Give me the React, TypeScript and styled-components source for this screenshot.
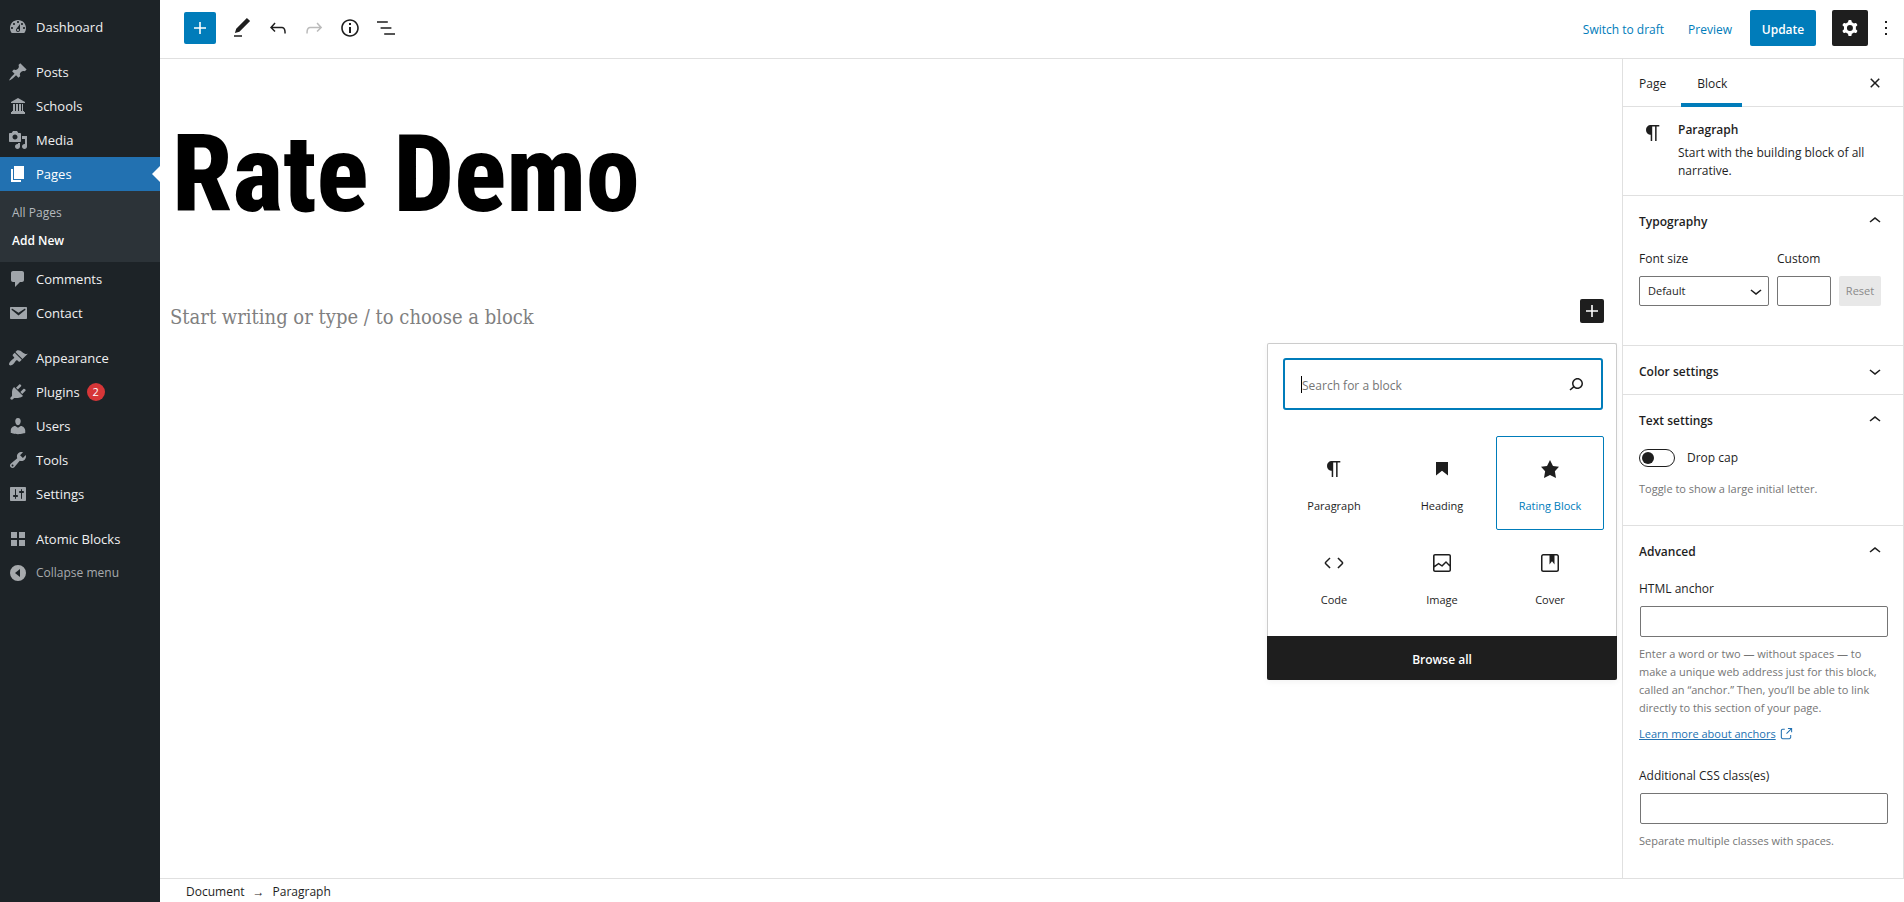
import React, { useState } from 'react';
import styled, { createGlobalStyle, css } from 'styled-components';

const Global = createGlobalStyle`
  *, *::before, *::after { box-sizing: border-box; }
  body { margin: 0; background: #fff; color: #1e1e1e; font: 12px/18px "Open Sans", "Noto Sans", sans-serif; }
  button, input, select { font: inherit; color: inherit; margin: 0; }
  button { padding: 0; border: 0; background: none; cursor: pointer; }
  h1, h2, p, ul { margin: 0; padding: 0; }
  ul { list-style: none; }
  a { text-decoration: none; color: inherit; }
  svg { display: block; flex: none; fill: currentColor; }
`;

const icons = {
  plus: 'M18 11.2h-5.2V6h-1.6v5.2H6v1.6h5.2V18h1.6v-5.2H18z',
  edit: 'M20.1 5.1L16.9 2 6.2 12.7l-1.3 4.4 4.5-1.3L20.1 5.1zM4 20.8h8v-1.5H4v1.5z',
  undo: 'M18.3 11.7c-.6-.6-1.4-.9-2.3-.9H6.7l2.9-3.3-1.1-1-4.5 5L8.5 16l1-1-2.7-2.7H16c.5 0 .9.2 1.3.5 1 1 1 3.4 1 4.5v.3h1.5v-.2c0-1.5 0-4.3-1.5-5.7z',
  redo: 'M15.6 6.5l-1.1 1 2.9 3.3H8c-.9 0-1.7.3-2.3.9-1.4 1.5-1.4 4.2-1.4 5.6v.2h1.5v-.3c0-1.1 0-3.5 1-4.5.3-.3.7-.5 1.3-.5h9.2L14.5 15l1.1 1.1 4.6-4.6-4.6-5z',
  info: 'M12 3.2c-4.8 0-8.8 3.9-8.8 8.8 0 4.8 3.9 8.8 8.8 8.8 4.8 0 8.8-3.9 8.8-8.8 0-4.8-4-8.8-8.8-8.8zm0 16c-4 0-7.2-3.3-7.2-7.2C4.8 8 8 4.8 12 4.8s7.2 3.3 7.2 7.2c0 4-3.2 7.2-7.2 7.2zM11 17h2v-6h-2v6zm0-8h2V7h-2v2z',
  list: 'M13.8 5.2H3v1.5h10.8V5.2zm-3.6 12v1.5H21v-1.5H10.2zm7.2-6H6.6v1.5h10.8v-1.5z',
  cog: 'M10.289 4.836A1 1 0 0111.275 4h1.306a1 1 0 01.987.836l.244 1.466c.787.26 1.503.679 2.108 1.218l1.393-.522a1 1 0 011.216.437l.653 1.13a1 1 0 01-.23 1.273l-1.148.944a6.025 6.025 0 010 2.435l1.149.946a1 1 0 01.23 1.272l-.653 1.13a1 1 0 01-1.216.437l-1.394-.522c-.605.54-1.32.958-2.108 1.218l-.244 1.466a1 1 0 01-.987.836h-1.306a1 1 0 01-.986-.836l-.244-1.466a5.995 5.995 0 01-2.108-1.218l-1.394.522a1 1 0 01-1.217-.436l-.653-1.131a1 1 0 01.23-1.272l1.149-.946a6.026 6.026 0 010-2.435l-1.148-.944a1 1 0 01-.23-1.272l.653-1.131a1 1 0 011.217-.437l1.393.522a5.994 5.994 0 012.108-1.218l.244-1.466zM14.929 12a3 3 0 11-6 0 3 3 0 016 0z',
  more: 'M13 19h-2v-2h2v2zm0-6h-2v-2h2v2zm0-6h-2V5h2v2z',
  close: 'M12 13.06l3.712 3.713 1.061-1.06L13.061 12l3.712-3.712-1.06-1.06L12 10.938 8.288 7.227l-1.061 1.06L10.939 12l-3.712 3.712 1.06 1.061L12 13.061z',
  paragraph: 'M18.3 4H9.9v-.1l-.9.2c-2.3.4-4 2.4-4 4.8s1.7 4.4 4 4.8l.7.1V20h1.5V5.5h2.9V20h1.5V5.5h2.7V4z',
  heading: 'M6 5v13.6l6-4.8 6 4.8V5H6z',
  star: 'M12 3l3 6 6 .75-4.12 4.62L18 21l-6-3-6 3 1.13-6.63L3 9.75 9 9z',
  code: 'M20.8 10.7l-4.3-4.3-1.1 1.1 4.3 4.3c.1.1.1.3 0 .4l-4.3 4.3 1.1 1.1 4.3-4.3c.7-.8.7-1.9 0-2.6zM4.2 11.8l4.3-4.3-1-1-4.3 4.3c-.7.7-.7 1.8 0 2.5l4.3 4.3 1.1-1.1-4.3-4.3c-.2-.1-.2-.3-.1-.4z',
  image: 'M19 3H5c-1.1 0-2 .9-2 2v14c0 1.1.9 2 2 2h14c1.1 0 2-.9 2-2V5c0-1.1-.9-2-2-2zM5 4.5h14c.3 0 .5.2.5.5v8.4l-3-2.9c-.3-.3-.8-.3-1 0L11.9 14 9 12c-.3-.2-.6-.2-.8 0l-3.6 2.6V5c-.1-.3.1-.5.4-.5zm14 15H5c-.3 0-.5-.2-.5-.5v-2.4l4.1-3 3 1.9c.3.2.7.2.9-.1L16 12l3.5 3.4V19c0 .3-.2.5-.5.5z',
  cover: 'M18.7 3H5.3C4 3 3 4 3 5.3v13.4C3 20 4 21 5.3 21h13.4c1.3 0 2.3-1 2.3-2.3V5.3C21 4 20 3 18.7 3zm.8 15.7c0 .4-.4.8-.8.8H5.3c-.4 0-.8-.4-.8-.8V5.3c0-.4.4-.8.8-.8h6.2v8.9l2.5-3.1 2.5 3.1V4.5h2.2c.4 0 .8.4.8.8v13.4z',
  search: 'M13.5 6C10.5 6 8 8.5 8 11.5c0 1.1.3 2.1.9 3l-3.4 3 1 1.1 3.4-2.9c1 .9 2.2 1.4 3.6 1.4 3 0 5.5-2.5 5.5-5.5C19 8.5 16.5 6 13.5 6zm0 9.5c-2.2 0-4-1.8-4-4s1.8-4 4-4 4 1.8 4 4-1.8 4-4 4z',
  up: 'M6.5 12.4L12 8l5.5 4.4-.9 1.2L12 10l-4.5 3.6-1-1.2z',
  down: 'M17.5 11.6L12 16l-5.5-4.4.9-1.2L12 14l4.5-3.6 1 1.2z',
  external: 'M18.2 17c0 .7-.6 1.2-1.2 1.2H7c-.7 0-1.2-.6-1.2-1.2V7c0-.7.6-1.2 1.2-1.2h3.2V4.2H7C5.5 4.2 4.2 5.5 4.2 7v10c0 1.5 1.2 2.8 2.8 2.8h10c1.5 0 2.8-1.2 2.8-2.8v-3.6h-1.5V17zM14.9 3v1.5h3.7l-6.4 6.4 1.1 1.1 6.4-6.4v3.7h1.5V3h-6.3z',
};

const menuIcons = {
  dashboard: 'M3.76 16h12.48c1.1-1.37 1.76-3.11 1.76-5 0-4.42-3.58-8-8-8s-8 3.58-8 8c0 1.89.66 3.63 1.76 5zM10 4c.55 0 1 .45 1 1s-.45 1-1 1-1-.45-1-1 .45-1 1-1zM6 6c.55 0 1 .45 1 1s-.45 1-1 1-1-.45-1-1 .45-1 1-1zm8 0c.55 0 1 .45 1 1s-.45 1-1 1-1-.45-1-1 .45-1 1-1zm-5.37 5.55L12 7v6c0 1.1-.9 2-2 2s-2-.9-2-2c0-.57.24-1.08.63-1.45zM4 10c.55 0 1 .45 1 1s-.45 1-1 1-1-.45-1-1 .45-1 1-1zm12 0c.55 0 1 .45 1 1s-.45 1-1 1-1-.45-1-1 .45-1 1-1zm-5 3c0-.55-.45-1-1-1s-1 .45-1 1 .45 1 1 1 1-.45 1-1z',
  posts: 'M10.44 3.02l1.82-1.82 6.36 6.35-1.83 1.82c-1.05-.68-2.48-.57-3.41.36l-.75.75c-.92.93-1.04 2.35-.35 3.41l-1.83 1.82-2.41-2.41-2.8 2.79c-.42.42-3.38 2.71-3.8 2.29s1.86-3.39 2.28-3.81l2.79-2.79L4.1 9.36l1.83-1.82c1.05.69 2.48.57 3.4-.36l.75-.75c.93-.92 1.05-2.35.36-3.41z',
  schools: 'M10 2l7 4v1H3V6zM5 8h2v7H5zM8 8h1v7H8zM9 8h1v7H9zM11 8h2v7h-2zM14 8h1v7h-1zM4 15h12v1H4zM3 16h14v2H3z',
  media: 'M13 11V4c0-.55-.45-1-1-1h-1.67L9 1H5L3.67 3H2c-.55 0-1 .45-1 1v7c0 .55.45 1 1 1h10c.55 0 1-.45 1-1zM7 4.5c1.38 0 2.5 1.12 2.5 2.5S8.38 9.5 7 9.5 4.5 8.38 4.5 7 5.62 4.5 7 4.5zM14 6h5v10.5c0 1.38-1.12 2.5-2.5 2.5S14 17.88 14 16.5s1.12-2.5 2.5-2.5c.17 0 .34.02.5.05V9h-3V6zm-4 8.05V13h2v3.5c0 1.38-1.12 2.5-2.5 2.5S7 17.88 7 16.5 8.12 14 9.5 14c.17 0 .34.02.5.05z',
  pages: 'M6 15V2h10v13H6zm-1 1h8v2H3V5h2v11z',
  comments: 'M5 2h9c1.1 0 2 .9 2 2v7c0 1.1-.9 2-2 2h-2l-5 5v-5H5c-1.1 0-2-.9-2-2V4c0-1.1.9-2 2-2z',
  contact: 'M3 4h15c.6 0 1 .4 1 1v10c0 .6-.4 1-1 1H3c-.6 0-1-.4-1-1V5c0-.6.4-1 1-1zm7.5 8.6l6.7-5.5c.3-.3.4-.7.2-1-.3-.4-.9-.5-1.2-.2l-5.7 3.9-5.7-3.9c-.4-.3-.9-.2-1.2.2-.2.3-.1.7.2 1z',
  appearance: 'M14.48 11.06L7.41 3.99l1.5-1.5c.5-.56 2.3-.47 3.51.32 1.21.8 1.43 1.28 2.91 2.1 1.18.64 2.45 1.26 4.45.85zm-.71.71L6.7 4.7 4.93 6.47c-.39.39-.39 1.02 0 1.41l1.06 1.06c.39.39.39 1.03 0 1.42-.6.6-1.43 1.11-2.21 1.69-.35.26-.7.53-1.01.84C1.43 14.23.4 16.08 1.4 17.07c.99 1 2.84-.03 4.18-1.36.31-.31.58-.66.85-1.02.57-.78 1.08-1.61 1.69-2.21.39-.39 1.02-.39 1.41 0l1.06 1.06c.39.39 1.02.39 1.41 0z',
  plugins: 'M13.11 4.36L9.87 7.6 8 5.73l3.24-3.24c.35-.34 1.05-.2 1.56.32.52.51.66 1.21.31 1.55zm-8 1.77l.91-1.12 9.01 9.01-1.19.84c-.71.71-2.63 1.16-3.82 1.16H6.14L4.9 17.26c-.59.59-1.54.59-2.12 0-.59-.58-.59-1.53 0-2.12l1.24-1.24v-3.88c0-1.13.4-3.19 1.09-3.89zm7.26 3.97l3.24-3.24c.34-.35 1.04-.21 1.55.31.52.51.66 1.21.31 1.55l-3.24 3.25z',
  users: 'M10 9.25c-2.27 0-2.73-3.44-2.73-3.44C7 4.02 7.82 2 9.97 2c2.16 0 2.98 2.02 2.71 3.81 0 0-.41 3.44-2.68 3.44zm0 2.57L12.72 10c2.39 0 4.52 2.33 4.52 4.53v2.49s-3.65 1.13-7.24 1.13c-3.65 0-7.24-1.13-7.24-1.13v-2.49c0-2.25 1.94-4.48 4.47-4.48z',
  tools: 'M16.68 9.77c-1.34 1.34-3.3 1.67-4.95.99l-5.41 6.52c-.99.99-2.59.99-3.58 0s-.99-2.59 0-3.57l6.52-5.42c-.68-1.65-.35-3.61.99-4.95 1.28-1.28 3.12-1.62 4.72-1.06l-2.89 2.89 2.82 2.82 2.86-2.87c.53 1.58.18 3.39-1.08 4.65zM3.81 16.21c.4.39 1.04.39 1.43 0 .4-.4.4-1.04 0-1.43-.39-.4-1.03-.4-1.43 0-.39.39-.39 1.03 0 1.43z',
  settings: 'M18 16V4c0-.55-.45-1-1-1H3c-.55 0-1 .45-1 1v12c0 .55.45 1 1 1h14c.55 0 1-.45 1-1zM8 11h1c.55 0 1 .45 1 1s-.45 1-1 1H8v1.5c0 .28-.22.5-.5.5s-.5-.22-.5-.5V13H6c-.55 0-1-.45-1-1s.45-1 1-1h1V5.5c0-.28.22-.5.5-.5s.5.22.5.5V11zm5-2h-1c-.55 0-1-.45-1-1s.45-1 1-1h1V5.5c0-.28.22-.5.5-.5s.5.22.5.5V7h1c.55 0 1 .45 1 1s-.45 1-1 1h-1v5.5c0 .28-.22.5-.5.5s-.5-.22-.5-.5V9z',
  blocks: 'M3 3h6v6H3zM11 3h6v6h-6zM3 11h6v6H3zM11 11h6v6h-6z',
  collapse: 'M10 2a8 8 0 100 16 8 8 0 000-16zM12 6v8l-5-4z',
};

function Icon({ name, size = 24 }: { name: keyof typeof icons; size?: number }) {
  return (
    <svg width={size} height={size} viewBox="0 0 24 24" aria-hidden="true">
      <path fillRule="evenodd" d={icons[name]} />
    </svg>
  );
}

function MenuIcon({ name }: { name: keyof typeof menuIcons }) {
  return (
    <svg width="20" height="20" viewBox="0 0 20 20" aria-hidden="true">
      <path fillRule="evenodd" d={menuIcons[name]} />
    </svg>
  );
}

/* ---------- frame ---------- */

const Shell = styled.div`
  display: grid;
  grid-template-columns: 160px minmax(0, 1fr);
  min-height: 100vh;
`;

const Editor = styled.div`
  display: grid;
  grid-template-columns: minmax(0, 1fr) 282px;
  grid-template-rows: 59px 1fr auto;
`;

/* ---------- admin menu ---------- */

const AdminMenu = styled.nav`
  padding-top: 10px;
  background: #1d2327;
  color: #f0f0f1;
  font-size: 13px;
`;

const MenuGroup = styled.ul`
  & + & { margin-top: 11px; }
`;

const menuRow = css`
  display: flex;
  align-items: center;
  gap: 8px;
  width: 100%;
  height: 34px;
  padding: 0 8px;
`;

const MenuLink = styled.a<{ $current?: boolean }>`
  ${menuRow}
  svg { color: #a0a5aa; }
  ${p => p.$current && css`
    position: relative;
    background: #2271b1;
    color: #fff;
    svg { color: #fff; }
    &::after {
      content: "";
      position: absolute;
      right: 0;
      border: 8px solid transparent;
      border-right-color: #fff;
    }
  `}
`;

const CollapseButton = styled.button`
  ${menuRow}
  color: #a7aaad;
  font-size: 12px;
`;

const SubMenu = styled.ul`
  padding: 8px 0 7px;
  background: #2c3338;
`;

const SubLink = styled.a<{ $current?: boolean }>`
  display: block;
  padding: 5px 12px;
  font-size: 12px;
  color: ${p => (p.$current ? '#fff' : '#b4b9be')};
  font-weight: ${p => (p.$current ? 600 : 400)};
`;

const Count = styled.span`
  width: 18px;
  margin-left: -1px;
  border-radius: 9px;
  background: #d63638;
  color: #fff;
  font-size: 11px;
  text-align: center;
`;

/* ---------- top bar ---------- */

const TopBar = styled.header`
  grid-column: 1 / -1;
  display: flex;
  align-items: center;
  justify-content: space-between;
  padding: 0 6px 2px 24px;
  border-bottom: 1px solid #e0e0e0;
`;

const Tools = styled.div`
  display: flex;
  align-items: center;
`;

const ToolButton = styled.button`
  display: grid;
  place-items: center;
  width: 36px;
  height: 36px;
  &:disabled { color: #bbb; }
`;

const Inserter = styled.button`
  display: grid;
  place-items: center;
  width: 32px;
  height: 32px;
  margin-right: 8px;
  border-radius: 2px;
  background: #007cba;
  color: #fff;
`;

const TextButton = styled.button`
  height: 36px;
  padding: 3px 12px 0;
  color: #007cba;
`;

const UpdateButton = styled.button`
  min-width: 66px;
  height: 36px;
  margin: 0 16px 0 6px;
  padding: 3px 8px 0;
  border-radius: 2px;
  background: #007cba;
  color: #fff;
  font-weight: 600;
`;

const SettingsToggle = styled(ToolButton)`
  border-radius: 2px;
  background: #1e1e1e;
  color: #fff;
`;

const MoreButton = styled(ToolButton)`
  width: 24px;
  margin-left: 6px;
`;

/* ---------- canvas ---------- */

const Canvas = styled.main`
  position: relative;
  padding: 47px 18px 0 10px;
`;

const Title = styled.h1`
  padding-left: 2px;
  color: #000;
  font: 800 108px/136px "Roboto Condensed", "Liberation Sans Narrow", "DejaVu Sans Condensed", sans-serif;
`;

const BlockRow = styled.div`
  display: flex;
  align-items: center;
  margin-top: 57px;
`;

const BlockInput = styled.input`
  flex: 1;
  min-width: 0;
  height: 36px;
  padding: 0;
  border: 0;
  outline: 0;
  background: none;
  font: 20px/36px "DejaVu Serif Condensed", "DejaVu Serif", serif;
  &::placeholder { color: #808080; opacity: 1; }
`;

const AddBlock = styled.button`
  display: grid;
  place-items: center;
  width: 24px;
  height: 24px;
  margin-bottom: 12px;
  border-radius: 2px;
  background: #1e1e1e;
  color: #fff;
`;

/* ---------- quick inserter ---------- */

const Popover = styled.section`
  position: absolute;
  top: 284px;
  right: 5px;
  width: 350px;
  border: 1px solid #ccc;
  border-bottom: 0;
  border-radius: 2px;
  background: #fff;
  box-shadow: 0 2px 6px rgba(0, 0, 0, 0.05);
`;

const SearchBox = styled.label`
  display: flex;
  align-items: center;
  height: 52px;
  margin: 14px 13px 26px 15px;
  padding: 0 13px 0 16px;
  border: 2px solid #007cba;
  border-radius: 3px;
`;

const Caret = styled.span`
  width: 1px;
  height: 17px;
  background: #000;
`;

const SearchInput = styled.input`
  flex: 1;
  min-width: 0;
  padding: 3px 0 0;
  border: 0;
  outline: 0;
  background: none;
  &::placeholder { color: #757575; opacity: 1; }
`;

const BlockGrid = styled.div`
  display: grid;
  grid-template-columns: repeat(3, 1fr);
  padding: 0 12px 12px;
`;

const BlockTile = styled.button<{ $active?: boolean }>`
  display: flex;
  flex-direction: column;
  align-items: center;
  gap: 16px;
  height: 94px;
  padding-top: 20px;
  border: 1px solid ${p => (p.$active ? '#007cba' : 'transparent')};
  border-radius: 2px;
  font-size: 11px;
  color: ${p => (p.$active ? '#007cba' : '#1e1e1e')};
  svg { color: #1e1e1e; }
`;

const BrowseAll = styled.button`
  display: block;
  width: calc(100% + 2px);
  height: 44px;
  margin: 0 -1px;
  padding-top: 3px;
  border-radius: 0 0 2px 2px;
  background: #1e1e1e;
  color: #fff;
  font-weight: 600;
`;

/* ---------- inspector ---------- */

const Inspector = styled.aside`
  border: solid #e0e0e0;
  border-width: 0 1px;
`;

const Tabs = styled.div`
  display: flex;
  height: 48px;
  padding-right: 16px;
  border-bottom: 1px solid #e0e0e0;
`;

const Tab = styled.button<{ $active?: boolean }>`
  height: 48px;
  padding: 2px 15px 0 16px;
  box-shadow: ${p => (p.$active ? 'inset 0 -4px #007cba' : 'none')};
`;

const CloseButton = styled(ToolButton)`
  width: 24px;
  height: 48px;
  margin-left: auto;
`;

const BlockCard = styled.div`
  display: flex;
  gap: 13px;
  padding: 14px 16px 15px 18px;
`;

const CardTitle = styled.h2`
  margin-bottom: 5px;
  font: inherit;
  font-weight: 600;
`;

const Section = styled.section<{ $bottom?: number }>`
  border-top: 1px solid #e0e0e0;
  padding: 0 16px ${p => p.$bottom ?? 0}px;
`;

const SectionToggle = styled.button`
  display: flex;
  align-items: center;
  justify-content: space-between;
  width: 100%;
  height: 48px;
  padding-top: 3px;
  font-weight: 600;
  svg { margin-bottom: 2px; }
`;

const Field = styled.div<{ $top?: number }>`
  display: flex;
  flex-direction: column;
  gap: 8px;
  margin-top: ${p => p.$top ?? 0}px;
`;

const FontRow = styled.div`
  display: flex;
  align-items: flex-end;
  gap: 8px;
  margin-top: 6px;
`;

const SelectWrap = styled.div`
  display: grid;
  align-items: center;
  > * { grid-area: 1 / 1; }
  svg { justify-self: end; margin-right: 1px; pointer-events: none; }
`;

const controlBox = css`
  height: 30px;
  border: 1px solid #757575;
  border-radius: 2px;
  background: #fff;
`;

const Select = styled.select`
  ${controlBox}
  width: 130px;
  padding: 0 8px;
  appearance: none;
  font-size: 11px;
`;

const NumberInput = styled.input`
  ${controlBox}
  width: 54px;
`;

const ResetButton = styled.button`
  width: 42px;
  height: 30px;
  border-radius: 2px;
  background: #e8e8e8;
  font-size: 11px;
  &:disabled { color: #8a8a8a; }
`;

const TextInput = styled.input`
  ${controlBox}
  height: 31px;
  margin: 0 -1px 0 1px;
  padding: 0 8px;
`;

const Help = styled.p`
  color: #757575;
  font-size: 11px;
`;

const ToggleRow = styled.label`
  display: flex;
  align-items: center;
  gap: 12px;
  margin: 6px 0 13px;
`;

const Toggle = styled.input`
  appearance: none;
  width: 36px;
  height: 18px;
  margin: 0;
  padding: 2px;
  border: 1px solid #1e1e1e;
  border-radius: 9px;
  &::before {
    content: "";
    display: block;
    width: 12px;
    height: 12px;
    border-radius: 50%;
    background: #1e1e1e;
  }
  &:checked { background: #007cba; }
  &:checked::before { margin-left: 18px; background: #fff; }
`;

const AnchorLink = styled.a`
  display: flex;
  align-items: center;
  gap: 2px;
  color: #2271b1;
  font-size: 11px;
  span { text-decoration: underline; }
`;

const Footer = styled.footer`
  grid-column: 1 / -1;
  display: flex;
  align-items: center;
  gap: 8px;
  height: 24px;
  padding: 2px 26px 0;
  border-top: 1px solid #e0e0e0;
`;

type Item = { icon: keyof typeof menuIcons; label: string; count?: number };

const topItems: Item[] = [
  { icon: 'posts', label: 'Posts' },
  { icon: 'schools', label: 'Schools' },
  { icon: 'media', label: 'Media' },
  { icon: 'pages', label: 'Pages' },
  { icon: 'comments', label: 'Comments' },
  { icon: 'contact', label: 'Contact' },
];

const siteItems: Item[] = [
  { icon: 'appearance', label: 'Appearance' },
  { icon: 'plugins', label: 'Plugins', count: 2 },
  { icon: 'users', label: 'Users' },
  { icon: 'tools', label: 'Tools' },
  { icon: 'settings', label: 'Settings' },
];

const blockTypes: { icon: keyof typeof icons; label: string }[] = [
  { icon: 'paragraph', label: 'Paragraph' },
  { icon: 'heading', label: 'Heading' },
  { icon: 'star', label: 'Rating Block' },
  { icon: 'code', label: 'Code' },
  { icon: 'image', label: 'Image' },
  { icon: 'cover', label: 'Cover' },
];

function MenuItem({ item }: { item: Item }) {
  const current = item.icon === 'pages';
  return (
    <li>
      <MenuLink href="#" $current={current}>
        <MenuIcon name={item.icon} />
        {item.label}
        {item.count && <Count>{item.count}</Count>}
      </MenuLink>
      {current && (
        <SubMenu>
          <li><SubLink href="#">All Pages</SubLink></li>
          <li><SubLink href="#" $current>Add New</SubLink></li>
        </SubMenu>
      )}
    </li>
  );
}

function Panel({ title, open = true, bottom, children }: {
  title: string; open?: boolean; bottom?: number; children?: React.ReactNode;
}) {
  return (
    <Section $bottom={bottom}>
      <SectionToggle type="button" aria-expanded={open}>
        {title}
        <Icon name={open ? 'up' : 'down'} />
      </SectionToggle>
      {children}
    </Section>
  );
}

export default function App() {
  const [dropCap, setDropCap] = useState(false);
  return (
    <>
      <Global />
      <Shell>
        <AdminMenu>
          <MenuGroup><MenuItem item={{ icon: 'dashboard', label: 'Dashboard' }} /></MenuGroup>
          <MenuGroup>{topItems.map(i => <MenuItem key={i.label} item={i} />)}</MenuGroup>
          <MenuGroup>{siteItems.map(i => <MenuItem key={i.label} item={i} />)}</MenuGroup>
          <MenuGroup>
            <MenuItem item={{ icon: 'blocks', label: 'Atomic Blocks' }} />
            <li><CollapseButton type="button"><MenuIcon name="collapse" />Collapse menu</CollapseButton></li>
          </MenuGroup>
        </AdminMenu>

        <Editor>
          <TopBar>
            <Tools>
              <Inserter type="button" aria-label="Add block"><Icon name="plus" /></Inserter>
              <ToolButton type="button" aria-label="Edit"><Icon name="edit" /></ToolButton>
              <ToolButton type="button" aria-label="Undo"><Icon name="undo" /></ToolButton>
              <ToolButton type="button" aria-label="Redo" disabled><Icon name="redo" /></ToolButton>
              <ToolButton type="button" aria-label="Details"><Icon name="info" /></ToolButton>
              <ToolButton type="button" aria-label="List view"><Icon name="list" /></ToolButton>
            </Tools>
            <Tools>
              <TextButton type="button">Switch to draft</TextButton>
              <TextButton type="button">Preview</TextButton>
              <UpdateButton type="button">Update</UpdateButton>
              <SettingsToggle type="button" aria-label="Settings"><Icon name="cog" /></SettingsToggle>
              <MoreButton type="button" aria-label="Options"><Icon name="more" /></MoreButton>
            </Tools>
          </TopBar>

          <Canvas>
            <Title>Rate Demo</Title>
            <BlockRow>
              <BlockInput aria-label="Paragraph block" placeholder="Start writing or type / to choose a block" />
              <AddBlock type="button" aria-label="Add block"><Icon name="plus" /></AddBlock>
            </BlockRow>
            <Popover>
              <SearchBox>
                <Caret />
                <SearchInput aria-label="Search for a block" placeholder="Search for a block" />
                <Icon name="search" />
              </SearchBox>
              <BlockGrid>
                {blockTypes.map(b => (
                  <BlockTile key={b.label} type="button" $active={b.icon === 'star'}>
                    <Icon name={b.icon} />
                    {b.label}
                  </BlockTile>
                ))}
              </BlockGrid>
              <BrowseAll type="button">Browse all</BrowseAll>
            </Popover>
          </Canvas>

          <Inspector>
            <Tabs>
              <Tab type="button">Page</Tab>
              <Tab type="button" $active>Block</Tab>
              <CloseButton type="button" aria-label="Close settings"><Icon name="close" /></CloseButton>
            </Tabs>
            <BlockCard>
              <Icon name="paragraph" />
              <div>
                <CardTitle>Paragraph</CardTitle>
                <p>Start with the building block of all narrative.</p>
              </div>
            </BlockCard>
            <Panel title="Typography" bottom={39}>
              <FontRow>
                <Field>
                  <label htmlFor="font-size">Font size</label>
                  <SelectWrap>
                    <Select id="font-size"><option>Default</option></Select>
                    <Icon name="down" />
                  </SelectWrap>
                </Field>
                <Field>
                  <label htmlFor="custom-size">Custom</label>
                  <NumberInput id="custom-size" />
                </Field>
                <ResetButton type="button" disabled>Reset</ResetButton>
              </FontRow>
            </Panel>
            <Panel title="Color settings" open={false} />
            <Panel title="Text settings" bottom={27}>
              <ToggleRow>
                <Toggle type="checkbox" checked={dropCap} onChange={e => setDropCap(e.target.checked)} />
                Drop cap
              </ToggleRow>
              <Help>Toggle to show a large initial letter.</Help>
            </Panel>
            <Panel title="Advanced" bottom={26}>
              <Field $top={6}>
                <label htmlFor="anchor">HTML anchor</label>
                <TextInput id="anchor" />
                <Help>
                  Enter a word or two — without spaces — to make a unique web address just for this
                  block, called an “anchor.” Then, you’ll be able to link directly to this section of
                  your page.
                </Help>
                <AnchorLink href="#"><span>Learn more about anchors</span><Icon name="external" size={16} /></AnchorLink>
              </Field>
              <Field $top={24}>
                <label htmlFor="classes">Additional CSS class(es)</label>
                <TextInput id="classes" />
                <Help>Separate multiple classes with spaces.</Help>
              </Field>
            </Panel>
          </Inspector>

          <Footer>
            <span>Document</span><strong>→</strong><span>Paragraph</span>
          </Footer>
        </Editor>
      </Shell>
    </>
  );
}
